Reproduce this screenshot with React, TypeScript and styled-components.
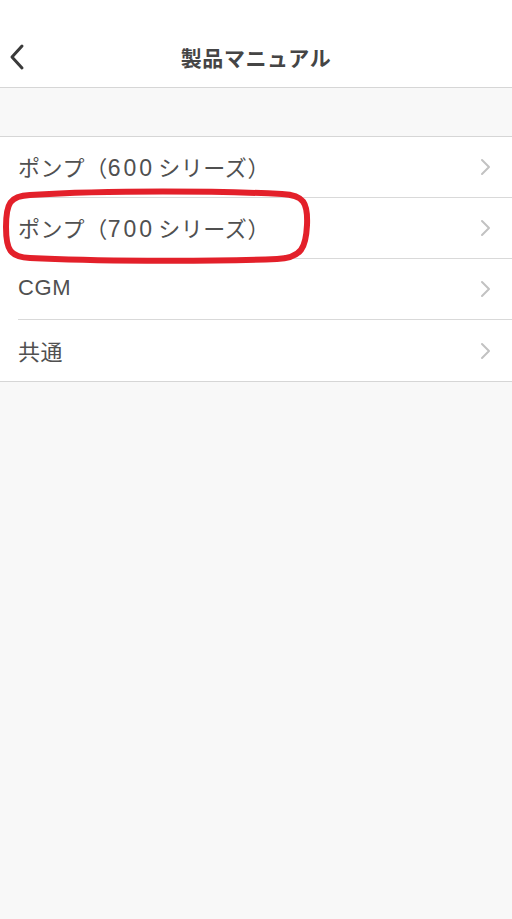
import * as React from 'react';
import styled, { createGlobalStyle } from 'styled-components';

const GlobalStyle = createGlobalStyle`
  html, body {
    margin: 0;
    padding: 0;
    background: #f8f8f8;
    font-family: 'Liberation Sans', 'Noto Sans CJK JP', sans-serif;
  }
`;

const Page = styled.div`
  position: relative;
  min-height: 919px;
  width: 512px;
  background: #f8f8f8;
`;

const Header = styled.header`
  height: 88px;
  display: grid;
  grid-template-columns: 60px 1fr 60px;
  align-items: end;
  background: #ffffff;
  border-bottom: 1px solid #d6d6d6;
  box-sizing: border-box;
`;

const HeaderInner = styled.div`
  height: 60px;
  display: flex;
  align-items: center;
  justify-content: ${p => (p.$center ? 'center' : 'flex-start')};
`;

const Title = styled.h1`
  margin: 0;
  font-family: 'Noto Sans CJK JP', sans-serif;
  font-size: 21px;
  font-weight: 700;
  color: #454545;
  letter-spacing: 0.6px;
`;

const BackButton = styled.button`
  border: none;
  background: none;
  padding: 0 0 0 8px;
  display: flex;
  align-items: center;
  cursor: pointer;
`;

const Spacer = styled.div`
  height: 48px;
`;

const List = styled.ul`
  margin: 0;
  padding: 0;
  list-style: none;
  background: #ffffff;
  border-top: 1px solid #d6d6d6;
  border-bottom: 1px solid #d6d6d6;
`;

const Row = styled.li`
  height: 61px;
  display: flex;
  align-items: center;
  padding-left: 18px;
  box-sizing: border-box;
`;

const RowBody = styled.div`
  flex: 1;
  height: 100%;
  display: flex;
  align-items: center;
  padding-right: 20px;
  border-bottom: ${p => (p.$last ? 'none' : '1px solid #d9d9d9')};
  box-sizing: border-box;
`;

const Label = styled.span`
  flex: 1;
  font-size: 22px;
  color: #505050;
  letter-spacing: 0.6px;
  padding-bottom: 2px;
  white-space: nowrap;
`;

const Num = styled.span`
  font-size: 23px;
  letter-spacing: 3px;
  margin-right: 3px;
`;

const Highlight = styled.svg`
  position: absolute;
  left: 0;
  top: 185px;
`;

type Item = { pre: string; num?: string; post?: string };

const items: Item[] = [
  { pre: 'ポンプ（', num: '600', post: 'シリーズ）' },
  { pre: 'ポンプ（', num: '700', post: 'シリーズ）' },
  { pre: 'CGM' },
  { pre: '共通' },
];

const Chevron = () => (
  <svg width="12" height="18" viewBox="0 0 12 18">
    <polyline points="2,2 9,9 2,16" fill="none" stroke="#c2c2c2" strokeWidth="2" strokeLinecap="round" strokeLinejoin="round" />
  </svg>
);

const App: React.FC = () => (
  <Page>
    <GlobalStyle />
    <Header>
      <HeaderInner>
        <BackButton aria-label="back">
          <svg width="18" height="28" viewBox="0 0 18 28">
            <polyline points="14,3 4,14 14,25" fill="none" stroke="#3a3a3a" strokeWidth="3" strokeLinecap="round" strokeLinejoin="round" />
          </svg>
        </BackButton>
      </HeaderInner>
      <HeaderInner $center>
        <Title>製品マニュアル</Title>
      </HeaderInner>
      <HeaderInner />
    </Header>
    <Spacer />
    <List>
      {items.map((item, i) => (
        <Row key={i}>
          <RowBody $last={i === items.length - 1}>
            <Label>
              {item.pre}
              {item.num && <Num>{item.num}</Num>}
              {item.post}
            </Label>
            <Chevron />
          </RowBody>
        </Row>
      ))}
    </List>
    <Highlight width="320" height="85" viewBox="0 0 320 85">
      <path
        d="M30 10 C 110 5, 220 6, 282 9 C 304 10, 308 18, 307 40 C 306 62, 302 73, 277 74 C 200 77, 90 76, 30 73 C 10 72, 6 65, 6 42 C 6 18, 10 11, 30 10 Z"
        fill="none"
        stroke="#e3202a"
        strokeWidth="6"
      />
    </Highlight>
  </Page>
);

export default App;
